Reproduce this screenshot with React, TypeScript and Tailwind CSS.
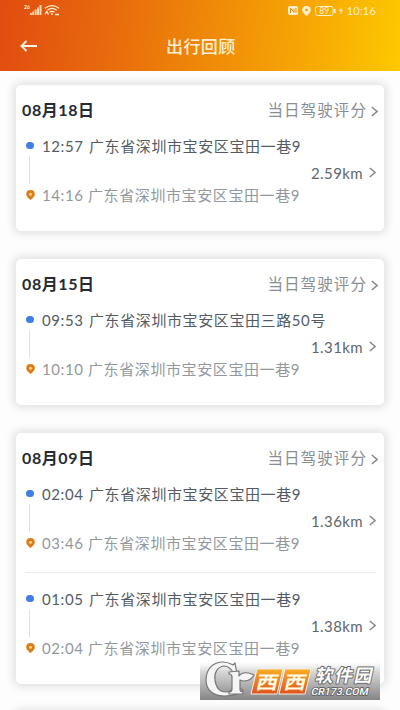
import React from 'react';

interface Trip {
    start: string;
    from: string;
    end: string;
    to: string;
    distance: string;
}

interface Day {
    date: string;
    trips: Trip[];
}

const LANE = '广东省深圳市宝安区宝田一巷9';

const days: Day[] = [
    { date: '08月18日', trips: [{ start: '12:57', from: LANE, end: '14:16', to: LANE, distance: '2.59km' }] },
    {
        date: '08月15日',
        trips: [{ start: '09:53', from: '广东省深圳市宝安区宝田三路50号', end: '10:10', to: LANE, distance: '1.31km' }],
    },
    {
        date: '08月09日',
        trips: [
            { start: '02:04', from: LANE, end: '03:46', to: LANE, distance: '1.36km' },
            { start: '01:05', from: LANE, end: '02:04', to: LANE, distance: '1.38km' },
        ],
    },
];

const Chevron: React.FC = () => (
    <svg className="w-[7px] h-[11px] shrink-0" viewBox="0 0 7 11" fill="none" stroke="#84898f" strokeWidth="1.5">
        <path d="M0.8 1L6 5.5L0.8 10" />
    </svg>
);

const StatusBar: React.FC = () => (
    <div className="h-[21px] pl-6 pr-[24px] flex items-center justify-between text-[#fff0cf]">
        {/* Signal and wifi */}
        <svg className="w-9 h-3 -mt-[1px]" viewBox="0 0 36 12" fill="currentColor">
            <text x="0" y="4.5" fontSize="5" fontWeight="700">26</text>
            <path d="M6 9h1.8v2H6zM8.3 7.5h1.8V11H8.3zM10.7 5.5h1.9V11H10.7zM13.1 3.5h1.9V11h-1.9zM15.5 1h2v10h-2z" opacity=".85" />
            <g fill="none" stroke="currentColor" strokeWidth="1.3">
                <path d="M21 4.2Q28 -1 35 4.2M23.3 6.3Q28 2.6 32.7 6.3M25.5 8.3Q28 6.4 30.5 8.3" />
                <path d="M21 10.5l1.8-3 1.7 3M31 10.5h4" />
            </g>
            <circle cx="28" cy="10" r="1" />
        </svg>
        {/* NFC, location, battery, clock */}
        <div className="flex items-center">
            <svg className="w-[10px] h-[9px] mr-[4px]" viewBox="0 0 10 9">
                <rect width="10" height="9" rx="2" fill="currentColor" />
                <path d="M2.5 7V2.3l3.5 4V2.5M8 2v5" fill="none" stroke="#ee8b08" strokeWidth="1" />
            </svg>
            <svg className="w-[9px] h-[10px] mr-[4px]" viewBox="0 0 9 10">
                <path d="M4.5 0a4.3 4.3 0 0 1 4.3 4.2C8.8 6.5 6.5 8 4.5 10C2.5 8 .2 6.5 .2 4.2A4.3 4.3 0 0 1 4.5 0z" fill="currentColor" />
                <circle cx="4.5" cy="4" r="1.3" fill="#f39b08" />
            </svg>
            <svg className="w-[21px] h-[10px] mr-[3px]" viewBox="0 0 21 10">
                <rect x=".5" y=".5" width="17.5" height="9" rx="2" fill="none" stroke="currentColor" />
                <rect x="19" y="3" width="1.5" height="4" fill="currentColor" />
                <text x="9.2" y="8" fontSize="8.5" textAnchor="middle" fill="currentColor">89</text>
            </svg>
            <svg className="w-[4px] h-[7px] mr-[4px]" viewBox="0 0 4 7" fill="currentColor">
                <path d="M2.6 0L0 4h1.6L1.3 7L4 3H2.4z" />
            </svg>
            <span className="text-[11px] leading-none tracking-[0.2px]">10:16</span>
        </div>
    </div>
);

const Header: React.FC = () => (
    <header className="h-[71px] bg-[linear-gradient(97deg,#e14c10_0%,#e8690d_27%,#ef8908_52%,#f8ac04_80%,#fdc900_100%)]">
        <StatusBar />
        <div className="h-[50px] pl-5 flex items-center">
            <svg className="w-[17px] h-[12px] text-[#fff5e6]" viewBox="0 0 17 12" fill="none" stroke="currentColor" strokeWidth="1.9">
                <path d="M1.5 6H17M6.5 1L1.5 6L6.5 11" />
            </svg>
            <h1 className="ml-[129px] text-[17px] leading-none tracking-[0.4px] text-[#fff0d5] font-medium">出行回顾</h1>
        </div>
    </header>
);

const TripRow: React.FC<{ trip: Trip }> = ({ trip }) => (
    <div className="flex h-[77px] text-[15px] leading-5 tracking-[0.6px]">
        {/* Route markers */}
        <div className="w-[26px] pl-[10px] pt-[6px] flex flex-col items-start">
            <span className="w-2 h-[7px] rounded-full bg-[#3f7fe3]" />
            <span className="w-px h-7 ml-[3px] mt-[7px] bg-[#e1e1e3]" />
            <svg className="w-[9px] h-[10px] mt-[6px]" viewBox="0 0 9 10">
                <path d="M4.5 0A4.3 4.3 0 0 1 8.8 4.2C8.8 6.7 6.5 8 4.5 10C2.5 8 .2 6.7 .2 4.2A4.3 4.3 0 0 1 4.5 0z" fill="#dc7d16" />
                <circle cx="4.5" cy="4.2" r="1.5" fill="#fbd49c" />
            </svg>
        </div>
        <div className="flex-1 flex flex-col whitespace-nowrap">
            <div className="flex text-[#535c66]">
                <span className="w-[47px]">{trip.start}</span>
                <span>{trip.from}</span>
            </div>
            <div className="h-[29px] pr-2 pt-[4px] flex items-center justify-end gap-[6px] text-[#60666e] tracking-[0.4px]">
                <span>{trip.distance}</span>
                <Chevron />
            </div>
            <div className="flex text-[#93989e]">
                <span className="w-[46px]">{trip.end}</span>
                <span>{trip.to}</span>
            </div>
        </div>
    </div>
);

const DayCard: React.FC<{ day: Day }> = ({ day }) => (
    <section className="rounded-[5px] bg-white pt-[15px] pb-[18px] shadow-[0_0_8px_3px_rgba(0,0,0,0.11)]">
        <div className="h-5 pl-[6px] pr-[6px] mb-4 flex items-center justify-between whitespace-nowrap">
            <h2 className="text-[16px] font-bold tracking-[0.6px] text-[#252a34]">{day.date}</h2>
            <div className="pt-[2px] flex items-center gap-[4px] text-[15.5px] tracking-[1.1px] text-[#898e94]">
                <span>当日驾驶评分</span>
                <Chevron />
            </div>
        </div>
        {day.trips.map((trip, i) => (
            <React.Fragment key={trip.start}>
                {i > 0 && <div className="h-px ml-[9px] mr-2 mt-[11px] mb-[16px] bg-[#ececed]" />}
                <TripRow trip={trip} />
            </React.Fragment>
        ))}
    </section>
);

const Watermark: React.FC = () => (
    <svg
        className="absolute left-[200px] top-[661px] w-[180px] h-[39px]"
        viewBox="0 0 180 39"
        fontFamily="'Noto Sans CJK SC', sans-serif"
    >
        <defs>
            <linearGradient id="strip" x1="0" y1="0" x2="0" y2="1">
                <stop offset="0" stopColor="#fff" stopOpacity="0.3" />
                <stop offset="0.25" stopColor="#dadada" />
                <stop offset="1" stopColor="#858585" />
            </linearGradient>
            <linearGradient id="tile" x1="0" y1="0" x2="0" y2="1">
                <stop offset="0" stopColor="#f9ad24" />
                <stop offset="1" stopColor="#e2521d" />
            </linearGradient>
        </defs>
        <rect width="180" height="39" fill="url(#strip)" />
        {/* Cr mark with the leaf */}
        <g fill="#f5f5f5" stroke="#777" strokeWidth="1.2" strokeLinejoin="round">
            <path d="M35 2L37 13H34C31 7 28 5 24 5C17 6 14 12 15 19C16 27 20 31 26 31C30 31 33 28 34 24L43 29C39 33 31 35 24 35C13 35 6 29 6 19C6 8 13 1 23 1C28 1 31 3 33 4Z" />
            <path d="M29 11L39 10V15C42 11 48 11 54 14C51 20 44 21 40 19V28C40 30 41 31 43 31V33H29V31C31 31 32 30 32 28V16C32 14 31 13 29 13Z" />
        </g>
        {/* Orange tiles */}
        <g stroke="#f6eee6" strokeWidth="1">
            <path d="M57 8H83L77 33H51Z" fill="url(#tile)" />
            <path d="M85 8H111L105 33H79Z" fill="url(#tile)" />
        </g>
        <g fontSize="20" fontWeight="700" fill="#fffbe4">
            <text transform="translate(55 28) skewX(-13) scale(1.1 0.92)">西</text>
            <text transform="translate(83 28) skewX(-13) scale(1.1 0.92)">西</text>
        </g>
        <g transform="skewX(-12)" fill="#fff" stroke="#666" strokeWidth="1.8" paintOrder="stroke" strokeLinejoin="round">
            <text x="119" y="21.5" fontSize="18" fontWeight="700" textLength="57">软件园</text>
            <text x="118" y="34" fontSize="10" fontWeight="500" textLength="57" lengthAdjust="spacingAndGlyphs" fontFamily="Roboto, sans-serif">
                CR173.COM
            </text>
        </g>
    </svg>
);

const App: React.FC = () => (
    <div className="relative w-[400px] h-[710px] overflow-hidden bg-[#fdfdfd] font-['Lato','Noto_Sans_CJK_SC',sans-serif]">
        <Header />
        <main className="px-4 pt-[14px] flex flex-col gap-7">
            {days.map((day) => (
                <DayCard key={day.date} day={day} />
            ))}
            <section className="h-20 rounded-[5px] bg-white shadow-[0_0_8px_3px_rgba(0,0,0,0.11)]" />
        </main>
        <Watermark />
    </div>
);

export default App;
